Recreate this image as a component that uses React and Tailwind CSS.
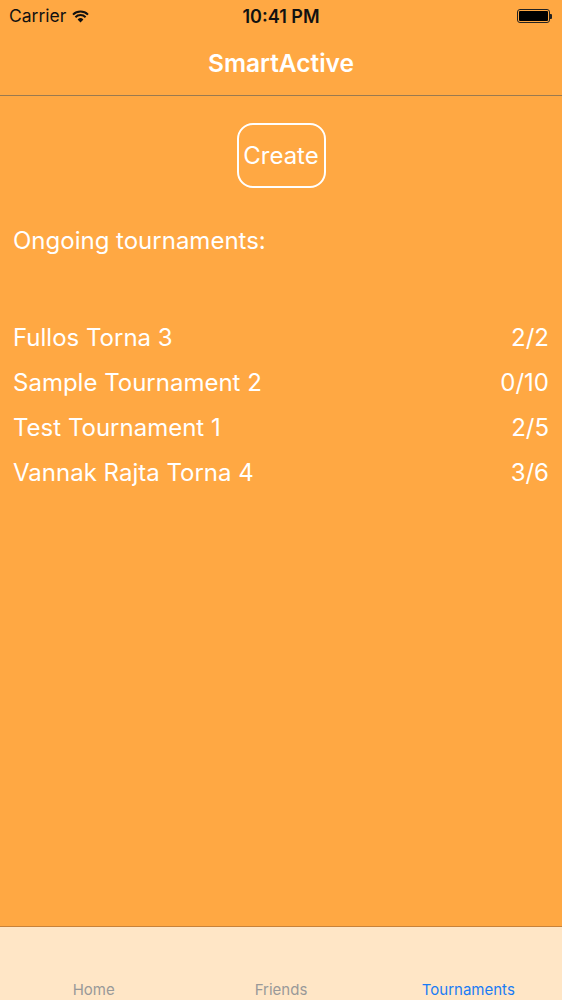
import React from 'react';

const tournaments = [
    { name: 'Fullos Torna 3', score: '2/2' },
    { name: 'Sample Tournament 2', score: '0/10' },
    { name: 'Test Tournament 1', score: '2/5' },
    { name: 'Vannak Rajta Torna 4', score: '3/6' },
];

const Wifi = () => (
    <svg width="17" height="13" viewBox="0 0 17 13" className="ml-[6px]">
        <path d="M8.5 12.5 L5.6 9.4 A4.2 4.2 0 0 1 11.4 9.4 Z" fill="#111" />
        <path d="M3.4 7.2 A7.3 7.3 0 0 1 13.6 7.2" stroke="#111" strokeWidth="2" fill="none" />
        <path d="M1 4.6 A10.8 10.8 0 0 1 16 4.6" stroke="#111" strokeWidth="2" fill="none" />
    </svg>
);

const Battery = () => (
    <div className="flex items-center">
        <div className="w-[33px] h-[14px] rounded-[3px] border border-[#222] p-[1px]">
            <div className="w-full h-full rounded-[1px] bg-black" />
        </div>
        <div className="w-[2px] h-[5px] bg-[#222] rounded-r-[1px]" />
    </div>
);

export default function App() {
    return (
        <div className="w-[562px] h-[1000px] flex flex-col bg-[#ffa843] text-white overflow-hidden" style={{ fontFamily: 'Inter, "Noto Sans", sans-serif' }}>
            {/* status bar */}
            <div className="h-[32px] flex items-center justify-between px-[9px] text-[#111]">
                <div className="flex items-center w-[120px] text-[17.5px]">
                    Carrier
                    <Wifi />
                </div>
                <div className="text-[18px] font-semibold">10:41 PM</div>
                <div className="w-[120px] flex justify-end pr-[1px]">
                    <Battery />
                </div>
            </div>

            {/* nav bar */}
            <div className="h-[64px] flex items-center justify-center border-b border-[#9a7a50]">
                <span className="text-[24.5px] font-semibold">SmartActive</span>
            </div>

            {/* content */}
            <div className="flex-1 flex flex-col">
                <div className="flex justify-center pt-[27px]">
                    <button className="w-[89px] h-[65px] rounded-[16px] border-2 border-white text-[24px] text-white pt-[1px]">
                        Create
                    </button>
                </div>
                <div className="px-[13px] pt-[35px] text-[24px]">Ongoing tournaments:</div>
                <div className="flex flex-col pt-[56px]">
                    {tournaments.map((t) => (
                        <div key={t.name} className="h-[45px] flex items-center justify-between pl-[13px] pr-[13px] text-[24px]">
                            <span>{t.name}</span>
                            <span>{t.score}</span>
                        </div>
                    ))}
                </div>
            </div>

            {/* tab bar */}
            <div className="h-[74px] bg-[#ffe6c6] border-t border-[#c8823a] flex items-end text-[15px] leading-[20px]">
                <div className="flex-1 text-center text-[#999999]">Home</div>
                <div className="flex-1 text-center text-[#999999]">Friends</div>
                <div className="flex-1 text-center text-[#1a7cf5]">Tournaments</div>
            </div>
        </div>
    );
}
